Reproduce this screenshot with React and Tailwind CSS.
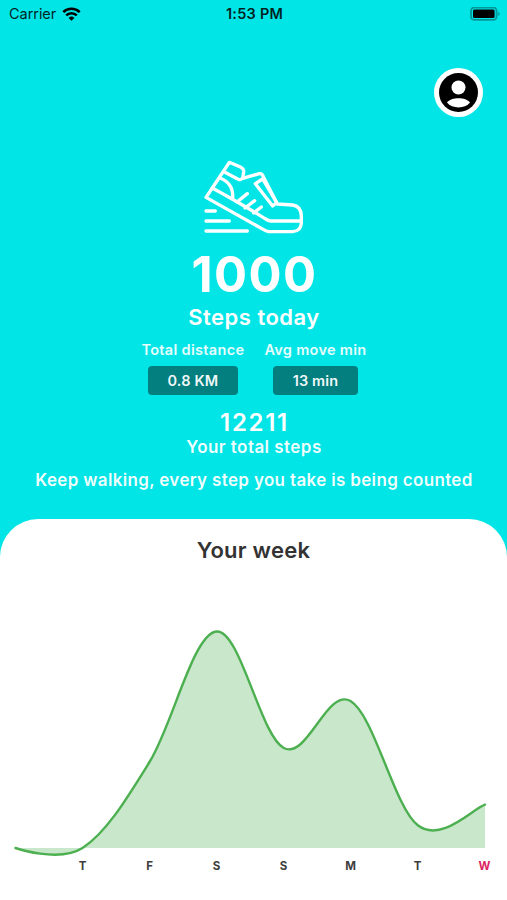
const DAYS = [
  { label: "", x: 15.5, y: 848 },
  { label: "T", x: 82.5, y: 848 },
  { label: "F", x: 149.5, y: 762 },
  { label: "S", x: 216.5, y: 631.5 },
  { label: "S", x: 283.8, y: 748 },
  { label: "M", x: 350.5, y: 701 },
  { label: "T", x: 417.8, y: 825.3 },
  { label: "W", x: 485, y: 804.7, today: true },
];

const SMOOTHNESS = 0.35;
const CHART_TOP = 610;
const BASELINE = 848;

// Cubic curve through the points, with tangents taken from the neighbours.
function curve(points) {
  let d = `M${points[0].x} ${points[0].y}`;
  let tx = 0;
  let ty = 0;
  for (let i = 1; i < points.length; i++) {
    const prev = points[i - 1];
    const cur = points[i];
    const next = points[Math.min(i + 1, points.length - 1)];
    const c1x = prev.x + tx;
    const c1y = prev.y + ty;
    tx = ((next.x - prev.x) / 2) * SMOOTHNESS;
    ty = ((next.y - prev.y) / 2) * SMOOTHNESS;
    d += ` C${c1x} ${c1y} ${cur.x - tx} ${cur.y - ty} ${cur.x} ${cur.y}`;
  }
  return d;
}

function StatusBar() {
  return (
    <div className="grid h-7 grid-cols-3 items-center pl-[9px] pr-[7px] text-black">
      <div className="flex items-center gap-[6px]">
        <span className="text-[14.5px] leading-7 tracking-[-0.05px] opacity-85">Carrier</span>
        <svg className="h-[15px] w-[19px]" viewBox="0 0 19 15" fill="none" stroke="black" strokeWidth="2.6">
          <path d="M1.3 5.2a11.6 11.6 0 0 1 16.4 0" />
          <path d="M4.2 8.4a7.5 7.5 0 0 1 10.6 0" />
          <path d="M9.5 13.8 6.6 10.9a4.1 4.1 0 0 1 5.8 0z" fill="black" stroke="none" />
        </svg>
      </div>
      <span className="text-center text-[14.5px] font-semibold leading-7 tracking-[0.25px] opacity-85">1:53 PM</span>
      <svg className="h-[15px] w-[31px] justify-self-end" viewBox="0 0.7 31 15">
        <rect x="2" y="1.2" width="25.6" height="12.4" rx="3.4" fill="none" stroke="#04989a" strokeWidth="1.8" />
        <rect x="4" y="3.1" width="21.6" height="8.6" rx="1.5" />
        <path d="M29.2 5.4c2 .8 2 3.4 0 4.2z" fill="#04989a" />
      </svg>
    </div>
  );
}

function Shoe() {
  return (
    <svg
      className="h-[95px] w-[120px]"
      viewBox="-2 -1 360 285"
      fill="none"
      stroke="white"
      strokeWidth="10"
      strokeLinecap="round"
      strokeLinejoin="round"
    >
      <path d="M53 113 104 36 139 51Q148 56 147 65L144 84 194 70Q202 68 206 79L248 161Q272 162 294 164Q319 168 320 196V218Q319 242 294 244H223Q215 243 207 238L34 141Z" />
      <path d="M53 113Q127 153 210 204Q219 211 228 212H319" />
      <path d="M88 64 129 86Q136 91 144 84" />
      <path d="M75 83Q118 98 114 146" />
      <path d="M182 100 204 86 246 157 234 167Z" />
      <path d="M127 155 158 130M151 173 180 151M177 188 200 170" />
      <path d="M34 182H62M34 212H104M34 242H158" />
    </svg>
  );
}

function Stat({ label, value, pillClass }) {
  return (
    <div className="flex flex-col items-center">
      <span className="whitespace-nowrap text-[14.5px] font-semibold leading-5 tracking-[0.32px] text-white/90">{label}</span>
      <span className={`mt-[6px] flex h-[29px] items-center justify-center rounded-[4px] bg-[#047f80] text-[14.5px] font-semibold tracking-[0.15px] text-white/95 ${pillClass}`}>
        {value}
      </span>
    </div>
  );
}

function WeekChart() {
  const line = curve(DAYS);
  const last = DAYS[DAYS.length - 1];
  return (
    <div className="mt-[44px]">
      <svg className="block h-[248px] w-[507px]" viewBox={`0 ${CHART_TOP} 507 248`}>
        <path d={`${line} L${last.x} ${BASELINE} L${DAYS[0].x} ${BASELINE} Z`} fill="#c9e7ca" />
        <path d={line} fill="none" stroke="#4caf50" strokeWidth="2.4" strokeLinecap="round" />
      </svg>
      <div className="ml-[49px] mr-[-11px] grid grid-cols-7">
        {DAYS.slice(1).map((day, i) => (
          <span
            key={i}
            className={`text-center text-[11.5px] font-bold leading-4 ${day.today ? "text-[#dc1f62]" : "text-[#3d3d3d]"}`}
          >
            {day.label}
          </span>
        ))}
      </div>
    </div>
  );
}

export default function App() {
  return (
    <div className="flex h-[900px] w-[507px] flex-col overflow-hidden bg-[#02e5e6] font-['Inter',sans-serif]">
      <StatusBar />
      <div className="mt-10 flex justify-end pr-6">
        <div className="flex size-[49px] items-center justify-center rounded-full bg-white">
          <svg className="size-[39px]" viewBox="0 0 39 39">
            <circle cx="19.5" cy="19.5" r="19.5" />
            <circle cx="19.5" cy="14.5" r="7" fill="white" />
            <path d="M8 29.5C12 23.8 27 23.8 31 29.5C26 36 13 36 8 29.5Z" fill="white" />
          </svg>
        </div>
      </div>
      <div className="mt-[33px] flex flex-col items-center text-white">
        <Shoe />
        <span className="h-[60px] pl-[2px] text-[49px] font-[650] leading-[59px] tracking-[1.4px]">1000</span>
        <span className="pl-[1px] text-[22px] font-semibold leading-6 tracking-[0.5px]">Steps today</span>
        <div className="mt-[11px] flex gap-5 pl-[1px]">
          <Stat label="Total distance" value="0.8 KM" pillClass="w-[90px]" />
          <Stat label="Avg move min" value="13 min" pillClass="w-[85px]" />
        </div>
        <span className="mt-[12px] pl-[2px] text-[24px] font-semibold leading-[31px] h-[30px] tracking-[1.7px]">12211</span>
        <span className="pl-[1px] text-[17px] font-semibold leading-5 tracking-[0.45px] text-white/95">Your total steps</span>
        <span className="mt-[13px] whitespace-nowrap pl-[1px] text-[17px] font-semibold leading-5 tracking-[0.34px] text-white/95">
          Keep walking, every step you take is being counted
        </span>
      </div>
      <div className="mt-[29px] flex-1 rounded-t-[38px] bg-white">
        <h2 className="pt-[15px] text-center text-[22px] font-semibold leading-8 tracking-[0.25px] text-[#333333]">Your week</h2>
        <WeekChart />
      </div>
    </div>
  );
}
